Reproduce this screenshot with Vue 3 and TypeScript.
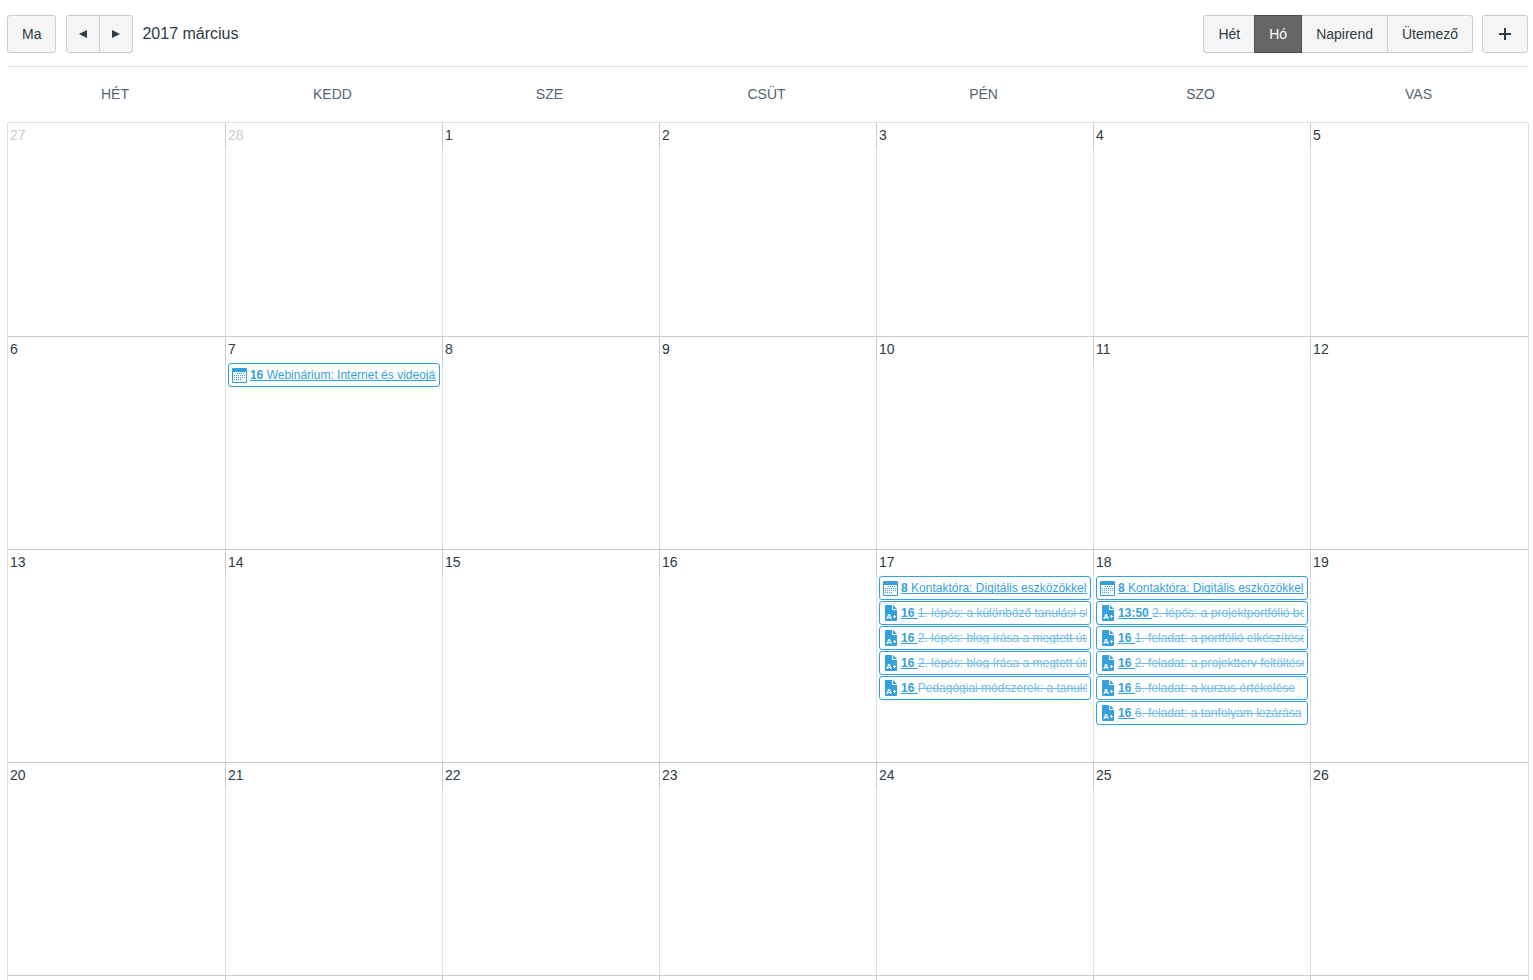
<script setup lang="ts">
import { ref } from 'vue'

interface CalendarEvent {
  kind: 'event' | 'assignment'
  time: string
  title: string
}

interface Day {
  date: string
  outside?: boolean
  events?: CalendarEvent[]
}

const views = ['Hét', 'Hó', 'Napirend', 'Ütemező']
const activeView = ref('Hó')

const weekdays = ['HÉT', 'KEDD', 'SZE', 'CSÜT', 'PÉN', 'SZO', 'VAS']

const eventsByDay: Record<number, CalendarEvent[]> = {
  7: [{ kind: 'event', time: '16', title: 'Webinárium: Internet és videoját' }],
  17: [
    { kind: 'event', time: '8', title: 'Kontaktóra: Digitális eszközökkel ' },
    { kind: 'assignment', time: '16', title: '1. lépés: a különböző tanulási st' },
    { kind: 'assignment', time: '16', title: '2. lépés: blog írása a megtett útr' },
    { kind: 'assignment', time: '16', title: '2. lépés: blog írása a megtett útr' },
    { kind: 'assignment', time: '16', title: 'Pedagógiai módszerek: a tanuló' },
  ],
  18: [
    { kind: 'event', time: '8', title: 'Kontaktóra: Digitális eszközökkel ' },
    { kind: 'assignment', time: '13:50', title: '2. lépés: a projektportfólió be' },
    { kind: 'assignment', time: '16', title: '1. feladat: a portfólió elkészítése' },
    { kind: 'assignment', time: '16', title: '2. feladat: a projektterv feltöltése' },
    { kind: 'assignment', time: '16', title: '5. feladat: a kurzus értékelése' },
    { kind: 'assignment', time: '16', title: '6. feladat: a tanfolyam lezárása' },
  ],
}

// The month grid starts on Monday, 27 February; the fifth week runs off the bottom edge.
const weeks: Day[][] = [0, 1, 2, 3].map((week) =>
  [0, 1, 2, 3, 4, 5, 6].map((weekday) => {
    const day = week * 7 + weekday - 1
    return day < 1
      ? { date: String(28 + day), outside: true }
      : { date: String(day), events: eventsByDay[day] }
  }),
)
</script>

<template>
  <main class="calendar">
    <header class="toolbar">
      <button type="button" class="btn">Ma</button>
      <div class="group nav">
        <button type="button" class="btn arrow" aria-label="Előző">
          <svg width="8" height="8" viewBox="0 0 8 8"><path d="M8 0v8L0 4z" /></svg>
        </button>
        <button type="button" class="btn arrow" aria-label="Következő">
          <svg width="8" height="8" viewBox="0 0 8 8"><path d="M0 0v8l8-4z" /></svg>
        </button>
      </div>
      <h1 class="title">2017 március</h1>
      <div class="group views">
        <button
          v-for="view in views"
          :key="view"
          type="button"
          class="btn"
          :class="{ active: view === activeView }"
          :aria-pressed="view === activeView"
          @click="activeView = view"
        >{{ view }}</button>
      </div>
      <button type="button" class="btn add" aria-label="Új esemény">
        <svg width="12" height="12" viewBox="0 0 12 12"><path d="M6 0v12M0 6h12" /></svg>
      </button>
    </header>

    <table class="month">
      <colgroup>
        <col class="first">
        <col class="middle" span="5">
        <col>
      </colgroup>
      <thead>
        <tr>
          <th v-for="name in weekdays" :key="name" scope="col">{{ name }}</th>
        </tr>
      </thead>
      <tbody>
        <tr v-for="(week, w) in weeks" :key="w">
          <td v-for="day in week" :key="day.date">
            <div class="date" :class="{ outside: day.outside }">{{ day.date }}</div>
            <a
              v-for="(item, i) in day.events"
              :key="i"
              href="#"
              class="event"
              :class="item.kind"
            >
              <svg v-if="item.kind === 'event'" class="icon" width="15" height="15" viewBox="0 0 15 15">
                <path class="fill" d="M1 0h13a1 1 0 0 1 1 1v13a1 1 0 0 1-1 1H1a1 1 0 0 1-1-1V1a1 1 0 0 1 1-1zM1 4v10h13V4z" fill-rule="evenodd" />
                <path class="dots" d="M5 5.500h8M2 7.500h11M2 9.500h11M2 11.500h8" />
              </svg>
              <svg v-else class="icon" width="15" height="16" viewBox="0 0 15 16">
                <path class="fill" d="M3 0h6v5h5v10a1 1 0 0 1-1 1H3a1 1 0 0 1-1-1V1a1 1 0 0 1 1-1zM10 0l4 4h-4z" />
                <text x="3" y="14">A</text>
                <path class="plus" d="M10 11.500h3M11.500 10v3" />
              </svg>
              <span class="label"><span class="time">{{ item.time + ' ' }}</span><span class="name">{{ item.title }}</span></span>
            </a>
          </td>
        </tr>
        <tr>
          <td v-for="name in weekdays" :key="name"></td>
        </tr>
      </tbody>
    </table>
  </main>
</template>

<style>
body {
  margin: 0;
  background: #fff;
}
</style>

<style scoped>
.calendar {
  box-sizing: border-box;
  height: 100vh;
  overflow: hidden;
  padding: 0 4px 0 7px;
  color: #2d3b45;
  font-family: "Liberation Sans", Arial, sans-serif;
  font-size: 14px;
}

.toolbar {
  display: flex;
  align-items: center;
  margin-right: 1px;
  padding: 15px 0 13px;
  border-bottom: 1px solid #dddfe1;
}

.btn {
  display: flex;
  align-items: center;
  justify-content: center;
  box-sizing: border-box;
  height: 38px;
  margin: 0;
  padding: 0 14px;
  border: 1px solid #c7cdd1;
  border-radius: 3px;
  background: #f5f5f5;
  color: #2d3b45;
  font: inherit;
  cursor: pointer;
}

.group {
  display: flex;
}

.group .btn {
  border-radius: 0;
}

.group .btn + .btn {
  margin-left: -1px;
}

.group .btn:first-child {
  border-radius: 3px 0 0 3px;
}

.group .btn:last-child {
  border-radius: 0 3px 3px 0;
}

.group .btn.active {
  position: relative;
  border-color: #4d4d4d;
  background: #666;
  color: #fff;
}

.nav {
  margin-left: 10px;
}

.btn.arrow {
  width: 34px;
  padding: 0;
}

.arrow path {
  fill: #2d3b45;
}

.title {
  margin: 0 0 0 9px;
  font-size: 16px;
  font-weight: 400;
}

.views {
  margin-left: auto;
}

.btn.add {
  width: 46px;
  margin-left: 9px;
  padding: 0;
}

.add path {
  fill: none;
  stroke: #2d3b45;
  stroke-width: 2;
}

.month {
  width: 100%;
  border-spacing: 0;
  table-layout: fixed;
}

.first {
  width: 14.32%;
}

.middle {
  width: 14.26%;
}

th {
  box-sizing: border-box;
  height: 55px;
  padding: 0 2px 2px 0;
  color: #556572;
  font-weight: 400;
}

/* The column rule is darker beside the date and turns lighter grey below it. */
td {
  box-sizing: border-box;
  height: 213px;
  padding: 2px 2px 0 3px;
  border-top: 1px solid #c7cdd1;
  background: linear-gradient(#c7cdd1 25px, #dddfe1 25px) left top / 1px 100% no-repeat;
  vertical-align: top;
}

td:first-child {
  background: linear-gradient(#dddfe1, #dddfe1) left top / 1px 100% no-repeat;
}

td:last-child {
  border-right: 1px solid #dddfe1;
}

tbody tr:first-child td {
  height: 214px;
  border-top-color: #dddfe1;
}

.date {
  height: 24px;
  line-height: 21px;
}

.date.outside {
  color: #c7cdd1;
}

.event {
  display: flex;
  align-items: center;
  gap: 3px;
  box-sizing: border-box;
  height: 24px;
  margin-bottom: 1px;
  padding: 0 3px;
  border: 1px solid #35a1dc;
  border-radius: 3px;
  color: #35a1dc;
  font-size: 12px;
  text-decoration: none;
}

.icon {
  flex: none;
}

.fill {
  fill: #35a1dc;
}

.dots {
  fill: none;
  stroke: #35a1dc;
  stroke-width: 1;
  stroke-dasharray: 1 1;
}

.icon text {
  fill: #fff;
  font-size: 8px;
  font-weight: 700;
}

.plus {
  fill: none;
  stroke: #fff;
  stroke-width: 1;
}

.label {
  flex: 1;
  min-width: 0;
  overflow: hidden;
  line-height: 12px;
  white-space: pre;
}

.time,
.name {
  text-decoration: underline;
  text-decoration-thickness: 1px;
  text-decoration-skip-ink: none;
  text-underline-offset: 1px;
}

.time {
  font-weight: 700;
}

.assignment .name {
  opacity: 0.7;
  text-decoration-line: line-through;
}
</style>
